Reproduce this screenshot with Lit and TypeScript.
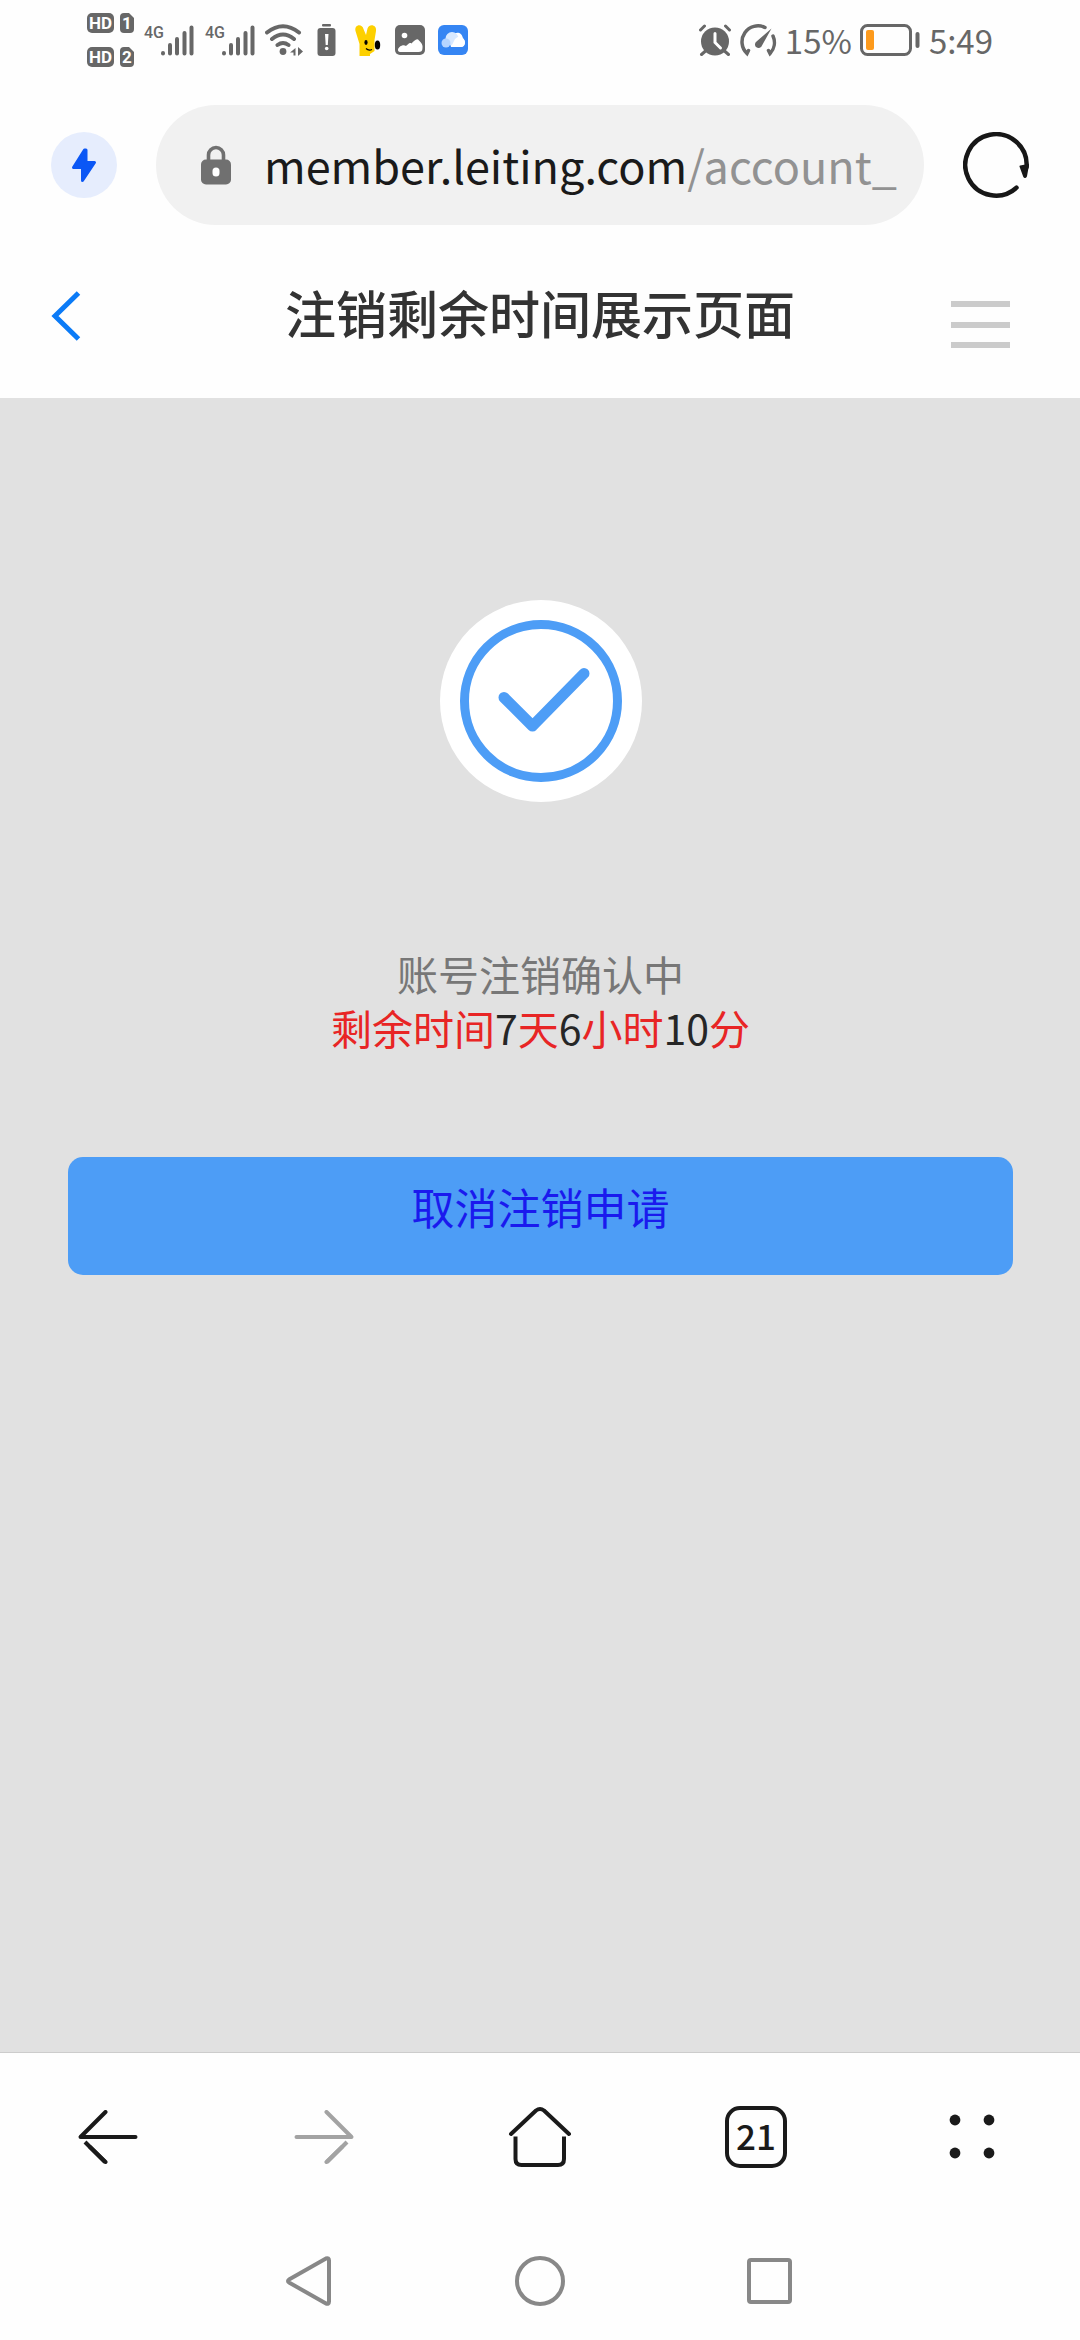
import { LitElement, html, css, svg } from "lit";
import { customElement, property } from "lit/decorators.js";

const sans = css`"Noto Sans CJK SC", "Noto Sans", sans-serif`;

@customElement("status-bar")
class StatusBar extends LitElement {
  static styles = css`
    :host { display: block; color: #676767; font-family: ${sans}; }
    .bar { display: flex; align-items: center; justify-content: space-between; height: 80px; padding: 0 87px; }
    .left, .right { display: flex; align-items: center; }
    .left { gap: 10px; }
    .right { gap: 8px; font-size: 33px; line-height: 40px; }
    .sims { display: flex; flex-direction: column; gap: 14px; }
    .sim { display: flex; gap: 6px; }
    .hd, .slot { background: #676767; color: #fff; height: 20px; font: 700 17px/20px Roboto, sans-serif; text-align: center; }
    .hd { width: 27px; border-radius: 5px; }
    .slot { width: 14px; border-radius: 4px; clip-path: polygon(0 0, 9px 0, 14px 5px, 14px 20px, 0 20px); }
    .signal { display: flex; align-items: flex-start; height: 31px; }
    .gen { font: 500 16px/16px Roboto, sans-serif; width: 17px; text-align: center; }
    .signals { display: flex; gap: 11px; }
    .apps { display: flex; gap: 13px; align-items: center; }
    svg { display: block; }
  `;

  private signal() {
    return html`<div class="signal"><span class="gen">4G</span>
      <svg width="33" height="31" viewBox="0 0 33 31" stroke="#676767" stroke-width="4" stroke-linecap="round" aria-hidden="true">
        <path d="M2 28v0.5M9 20v8.5M16 14v14.500M23.500 8v20.500M30.500 2.500v26" />
      </svg></div>`;
  }

  render() {
    return html`<div class="bar">
      <div class="left">
        <div class="sims">
          ${[1, 2].map((n) => html`<div class="sim"><span class="hd">HD</span><span class="slot">${n}</span></div>`)}
        </div>
        <div class="signals">${this.signal()}${this.signal()}</div>
        <div class="apps">
          <svg width="39" height="32" viewBox="0 0 39 32" aria-hidden="true">
            <g fill="none" stroke="#676767" stroke-width="4" stroke-linecap="round">
              <path d="M2 8.500Q18 -4 34 8.500M7 15Q18 6 29 15M12.500 21Q18 17 23.500 21" />
            </g>
            <circle cx="18" cy="27.500" r="3.400" fill="#676767" />
            <path d="M30.500 24v7.500h-2v-3h-3.500zM33 23l5 4.500-5 4.500z" fill="#676767" />
          </svg>
          <svg width="19" height="33" viewBox="0 0 19 33" aria-hidden="true">
            <rect x="5" y="0" width="9" height="2.500" rx="1" fill="#676767" />
            <rect x="0.500" y="4" width="18" height="28" rx="3" fill="#676767" />
            <path d="M8 10h3.500l-0.700 11h-2.100z" fill="#fff" />
            <circle cx="9.700" cy="24.500" r="1.800" fill="#fff" />
          </svg>
          <svg width="33" height="34" viewBox="-5 0 33 34" aria-hidden="true">
            <path d="M5.500 33V21L1.500 8C0 1.500 8 0 9.500 6l2.500 6 1.500-6.500C15.500 0 23 2 22 8l-1.500 9v11l-4.500 3v2z" fill="#fdd000" />
            <ellipse cx="12" cy="19.500" rx="1.600" ry="2.400" />
            <ellipse cx="23.500" cy="22" rx="2.700" ry="4.600" />
            <path d="M12 25.500q2.500 2.500 6 1" fill="none" stroke="#000" stroke-width="1.200" />
          </svg>
          <svg width="30" height="30" viewBox="0 0 30 30" aria-hidden="true">
            <rect width="30" height="30" rx="5" fill="#676767" />
            <circle cx="9.500" cy="10.500" r="2.800" fill="#fff" />
            <path d="M3 25c0-3 5-6 8-4 2-1 3-4 5.500-2.500C19 16 22 12.500 24 15.500c2.500 2 4 5 3.500 7.500 0 3-1.500 4-4 4H6c-2 0-3-.5-3-2z" fill="#fff" />
          </svg>
          <svg width="30" height="30" viewBox="0 0 30 30" aria-hidden="true">
            <rect width="30" height="30" rx="6" fill="#3585f3" />
            <path d="M13 22a6 6 0 0 1 0-6c-1-9 11-12 12-2 3 1 3 8-2 8z" fill="#fff" />
            <circle cx="14" cy="13.500" r="6.500" fill="#d8e9ff" />
            <path d="M13 22l4-8q3-3 6-2c5 1 5 10 0 10z" fill="#fff" />
            <circle cx="8" cy="18" r="4.500" fill="#b5d4ff" />
          </svg>
        </div>
      </div>
      <div class="right">
        <svg width="34" height="32" viewBox="0 0 34 32" aria-hidden="true">
          <circle cx="17" cy="17.500" r="14" fill="#676767" />
          <path d="M2.500 6l4-4M31.500 6l-4-4M7.500 27l-4 3.500M26.500 27l4 3.500" stroke="#676767" stroke-width="3" stroke-linecap="round" />
          <path d="M17 9.500v9l5.500 5.500" fill="none" stroke="#fff" stroke-width="3" stroke-linecap="round" />
        </svg>
        <svg width="37" height="33" viewBox="0 0 37 33" aria-hidden="true">
          <path d="M25 3.500A16 16 0 0 0 7 29.500l1.500-3M33 12a16 16 0 0 1-3 17.500l-1.500-3" fill="none" stroke="#676767" stroke-width="3.500" stroke-linecap="round" />
          <path d="M31.500 4.500L22 21.500a3.600 3.600 0 1 1-5.500-4z" fill="#676767" />
        </svg>
        <span>15%</span>
        <svg width="61" height="32" viewBox="0 0 61 32" aria-hidden="true">
          <rect x="1.500" y="1.500" width="49" height="29" rx="6" fill="none" stroke="#676767" stroke-width="3" />
          <rect x="6" y="6" width="8" height="20" rx="2" fill="#fd9a1c" />
          <rect x="55.500" y="8" width="4" height="16" rx="2" fill="#676767" />
        </svg>
        <span>5:49</span>
      </div>
    </div>`;
  }
}

@customElement("address-bar")
class AddressBar extends LitElement {
  @property() host = "";
  @property() path = "";
  static styles = css`
    :host { display: block; font-family: ${sans}; }
    .row { display: flex; align-items: center; gap: 39px; padding: 25px 51px 0; }
    button { border: 0; padding: 0; background: none; font: inherit; cursor: pointer; }
    .boost { width: 66px; height: 66px; border-radius: 50%; background: #e6edfd; }
    .pill { flex: 1; min-width: 0; height: 120px; border-radius: 60px; background: #f1f1f1; display: flex; align-items: center; gap: 32px; padding: 0 16px 0 44px; }
    .url { flex: 1; min-width: 0; overflow: hidden; white-space: nowrap; text-align: left; font-size: 45px; line-height: 66px; color: #1a1a1a; }
    .path { color: #929292; }
    svg { display: block; }
  `;
  render() {
    return html`<div class="row">
      <button class="boost" aria-label="加速">
        <svg width="66" height="66" viewBox="0 0 66 66">
          <path d="M33.500 18L22.500 35.500h9V48.500L43.500 30.500h-8.500V18z" fill="#0b57f5" stroke="#0b57f5" stroke-width="3" stroke-linejoin="round" />
        </svg>
      </button>
      <button class="pill">
        <svg width="32" height="40" viewBox="0 0 32 40" aria-hidden="true">
          <path d="M8.500 16V10a7.500 7.500 0 0 1 15 0v6" fill="none" stroke="#707070" stroke-width="3.600" />
          <rect x="1" y="14.500" width="30" height="25" rx="5" fill="#707070" />
          <rect x="12.500" y="22.500" width="7" height="9" rx="3.500" fill="#fff" />
        </svg>
        <span class="url">${this.host}<span class="path">${this.path}</span></span>
      </button>
      <button class="reload" aria-label="刷新">
        <svg width="66" height="66" viewBox="0 0 66 66">
          <path d="M53.500 55.700A30.700 30.700 0 1 1 63.600 35" fill="none" stroke="#171717" stroke-width="4.500" stroke-linecap="round" />
          <path d="M57.500 34.500l7.500-1.500-2 11q-1 2-2 0z" fill="#171717" stroke="#171717" stroke-width="2" stroke-linejoin="round" />
        </svg>
      </button>
    </div>`;
  }
}

@customElement("page-header")
class PageHeader extends LitElement {
  @property() heading = "";
  static styles = css`
    :host { display: block; font-family: ${sans}; }
    .head { display: grid; grid-template-columns: 60px 1fr 60px; align-items: center; height: 173px; padding: 8px 70px 0 51px; box-sizing: border-box; }
    h1 { margin: 0; padding: 0 0 8px 19px; text-align: center; font-size: 51px; line-height: 60px; font-weight: 500; color: #333; }
    button { border: 0; padding: 0; background: none; cursor: pointer; }
    .menu { padding-top: 18px; }
    svg { display: block; }
  `;
  render() {
    return html`<header class="head">
      <button aria-label="返回">
        <svg width="30" height="50" viewBox="0 0 30 50"><path d="M27.500 2L4 25l23.500 23" fill="none" stroke="#0b7bf7" stroke-width="5" /></svg>
      </button>
      <h1>${this.heading}</h1>
      <button class="menu" aria-label="菜单">
        <svg width="60" height="48" viewBox="0 0 60 48"><path d="M1 3h59M1 24h59M1 44h59" stroke="#cbcbcb" stroke-width="6" /></svg>
      </button>
    </header>`;
  }
}

@customElement("cancel-status")
class CancelStatus extends LitElement {
  static styles = css`
    :host { display: block; font-family: ${sans}; }
    .content { display: flex; flex-direction: column; align-items: center; padding: 202px 67px 0 68px; }
    .badge { display: block; }
    .texts { margin: 144px 0 103px; text-align: center; font-size: 41px; line-height: 54px; }
    p { margin: 0; }
    .state { color: #777; }
    .left { color: #e82525; }
    b { font-weight: 400; color: #262626; }
    a { box-sizing: border-box; width: 100%; padding: 17px 0 37px; border-radius: 15px; background: #4d9df6; color: #1a1aee; text-align: center; text-decoration: none; font-size: 43px; line-height: 64px; }
  `;
  render() {
    return html`<div class="content">
      <svg class="badge" width="202" height="202" viewBox="0 0 202 202" aria-hidden="true">
        <circle cx="101" cy="101" r="101" fill="#fff" />
        <g fill="none" stroke="#4d9df6">
          <circle cx="101" cy="101" r="76.500" stroke-width="9" />
          <path d="M64 97.500l28.500 28.500L144 73.500" stroke-width="11" stroke-linecap="round" stroke-linejoin="round" />
        </g>
      </svg>
      <div class="texts">
        <p class="state">账号注销确认中</p>
        <p class="left">剩余时间<b>7</b>天<b>6</b>小时<b>10</b>分</p>
      </div>
      <a href="#cancel">取消注销申请</a>
    </div>`;
  }
}

@customElement("browser-toolbar")
class BrowserToolbar extends LitElement {
  @property({ type: Number }) tabs = 0;
  static styles = css`
    :host { display: block; border-top: 1px solid #ccc; font-family: ${sans}; }
    nav { display: grid; grid-template-columns: repeat(5, 1fr); height: 168px; }
    button { display: flex; align-items: center; justify-content: center; border: 0; padding: 0; background: none; font: inherit; cursor: pointer; color: #1a1a1a; }
    .tabs { box-sizing: border-box; width: 62px; height: 62px; border: 4px solid #1a1a1a; border-radius: 15px; font-size: 35px; line-height: 50px; text-align: center; font-weight: 500; }
    .dim { color: #a3a3a3; }
    svg { display: block; fill: none; stroke: currentColor; stroke-width: 4; stroke-linecap: round; stroke-linejoin: round; }
    .dots { fill: currentColor; stroke: none; }
  `;
  render() {
    const arrow = svg`<path d="M57.500 27H2.500L27.500 2" /><path d="M7 32l20 20" stroke-linecap="butt" /><path d="M12 37l15.500 15" />`;
    return html`<nav>
      <button aria-label="后退"><svg width="60" height="54" viewBox="0 0 60 54">${arrow}</svg></button>
      <button aria-label="前进" class="dim"><svg width="60" height="54" viewBox="0 0 60 54"><g transform="matrix(-1 0 0 1 60 0)">${arrow}</g></svg></button>
      <button aria-label="主页"><svg width="66" height="62" viewBox="0 0 66 62">
        <path d="M4 28L29 4.500q4-3 8 0L62 28" />
        <path d="M8.500 30.500V53q0 6 6 6H51q6 0 6-6V30.500" stroke-linecap="butt" />
      </svg></button>
      <button aria-label="标签页"><span class="tabs">${this.tabs}</span></button>
      <button aria-label="更多"><svg class="dots" width="46" height="46" viewBox="0 0 46 46">
        <circle cx="6" cy="6" r="5.400" /><circle cx="40" cy="6" r="5.400" /><circle cx="6" cy="39" r="5.400" /><circle cx="40" cy="39" r="5.400" />
      </svg></button>
    </nav>`;
  }
}

@customElement("system-nav")
class SystemNav extends LitElement {
  static styles = css`
    :host { display: block; }
    nav { display: grid; grid-template-columns: repeat(3, 230px); justify-content: center; height: 119px; }
    button { display: flex; align-items: center; justify-content: center; border: 0; padding: 0; background: none; cursor: pointer; }
    svg { display: block; fill: none; stroke: #888; stroke-width: 4; stroke-linejoin: round; }
  `;
  render() {
    return html`<nav>
      <button aria-label="返回"><svg width="50" height="50" viewBox="0 0 50 50"><path d="M4 23.500L41 2.500q3-1 3 2v41q0 3-3 2L4 26.500q-2-1.500 0-3z" /></svg></button>
      <button aria-label="桌面"><svg width="50" height="50" viewBox="0 0 50 50"><circle cx="25" cy="25" r="23" /></svg></button>
      <button aria-label="最近任务"><svg width="46" height="46" viewBox="0 0 46 46"><rect x="2" y="2" width="41" height="42" rx="2" /></svg></button>
    </nav>`;
  }
}

@customElement("app-root")
class AppRoot extends LitElement {
  static styles = css`
    :host { display: flex; flex-direction: column; min-height: 100vh; background: #fefefe; }
    main { flex: 1; background: #e1e1e1; }
  `;
  render() {
    return html`
      <status-bar></status-bar>
      <address-bar host="member.leiting.com" path="/account_"></address-bar>
      <page-header heading="注销剩余时间展示页面"></page-header>
      <main><cancel-status></cancel-status></main>
      <browser-toolbar tabs="21"></browser-toolbar>
      <system-nav></system-nav>
    `;
  }
}
